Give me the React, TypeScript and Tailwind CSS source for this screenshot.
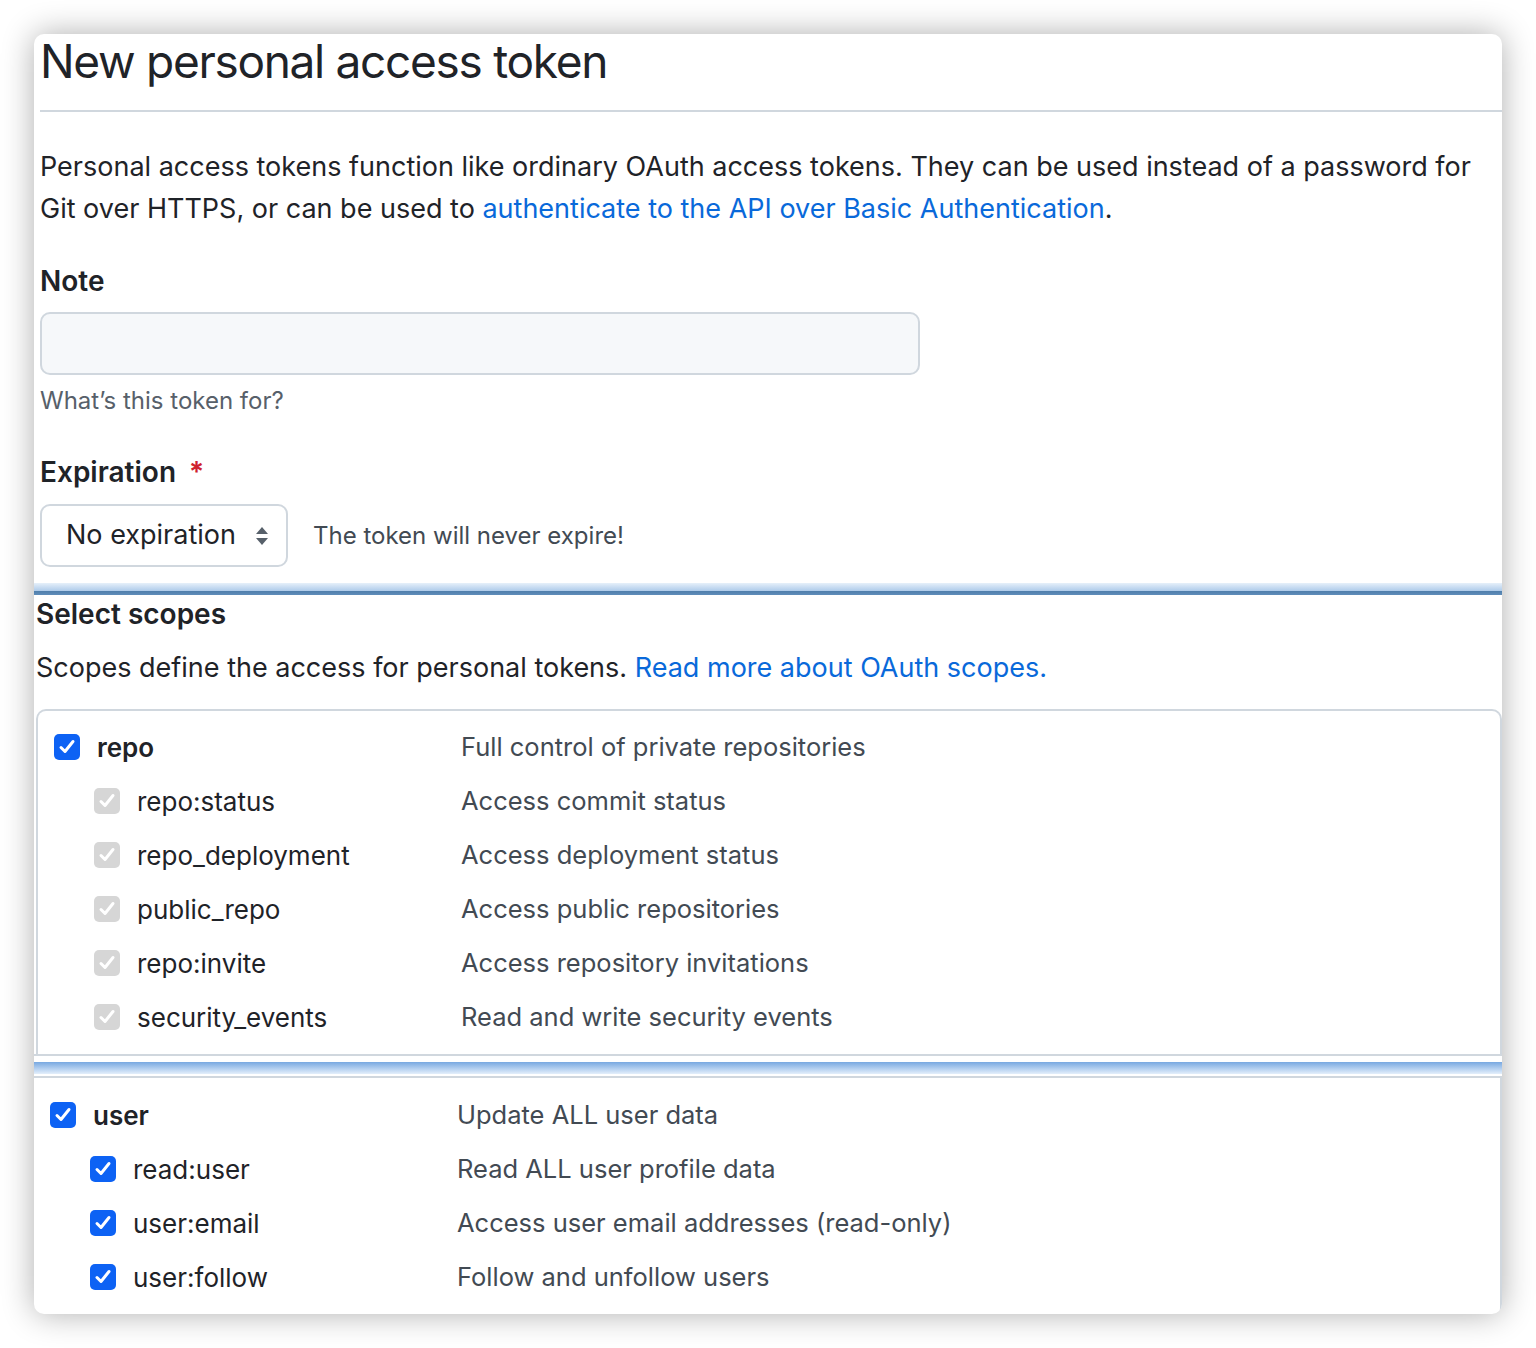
import React from "react";

const font = { fontFamily: "Inter, 'Noto Sans', sans-serif" };

function Check({ variant }: { variant: "blue" | "gray" }) {
  const bg = variant === "blue" ? "bg-[#0d62f4]" : "bg-[#d6d6d6]";
  return (
    <span className={`flex h-[26px] w-[26px] shrink-0 items-center justify-center rounded-[5px] ${bg}`}>
      <svg width="20" height="20" viewBox="0 0 20 20" fill="none">
        <path d="M4 10.5 L8 14.5 L16 4.5" stroke="white" strokeWidth="3" strokeLinecap="round" strokeLinejoin="round" />
      </svg>
    </span>
  );
}

type Row = { name: string; desc: string; sub?: boolean; variant: "blue" | "gray" };

function ScopeRow({ row }: { row: Row }) {
  return (
    <div className="flex h-[54px] items-center">
      <div className="flex w-[407px] items-center">
        <div className={row.sub ? "pl-[40px]" : ""}>
          <Check variant={row.variant} />
        </div>
        <span className={`ml-[17px] text-[26px] text-[#1f2328] ${row.sub ? "" : "font-semibold"}`}>{row.name}</span>
      </div>
      <span className="text-[25.5px] text-[#424a53]">{row.desc}</span>
    </div>
  );
}

const repoRows: Row[] = [
  { name: "repo", desc: "Full control of private repositories", variant: "blue" },
  { name: "repo:status", desc: "Access commit status", sub: true, variant: "gray" },
  { name: "repo_deployment", desc: "Access deployment status", sub: true, variant: "gray" },
  { name: "public_repo", desc: "Access public repositories", sub: true, variant: "gray" },
  { name: "repo:invite", desc: "Access repository invitations", sub: true, variant: "gray" },
  { name: "security_events", desc: "Read and write security events", sub: true, variant: "gray" },
];

const userRows: Row[] = [
  { name: "user", desc: "Update ALL user data", variant: "blue" },
  { name: "read:user", desc: "Read ALL user profile data", sub: true, variant: "blue" },
  { name: "user:email", desc: "Access user email addresses (read-only)", sub: true, variant: "blue" },
  { name: "user:follow", desc: "Follow and unfollow users", sub: true, variant: "blue" },
];

export default function App() {
  return (
    <div className="min-h-[1348px] w-[1536px] bg-white p-[34px]" style={font}>
      <div className="h-[1280px] w-[1468px] overflow-hidden rounded-[10px] bg-white shadow-[0_0_32px_rgba(0,0,0,0.32)]">
        {/* top section */}
        <div className="pl-[6px]">
          <h1 className="border-b-2 border-[#d0d7de] pb-[22px] text-[46px] leading-[54px] font-normal tracking-[-1.3px] text-[#1f2328]">
            New personal access token
          </h1>
          <p className="mt-[34px] pr-[4px] text-[27px] leading-[42px] text-[#1f2328]">
            Personal access tokens function like ordinary OAuth access tokens. They can be used instead of a password for
            Git over HTTPS, or can be used to{" "}
            <span className="text-[#0969da]">authenticate to the API over Basic Authentication</span>.
          </p>
          <div className="mt-[30px] text-[28px] leading-[42px] font-semibold text-[#1f2328]">Note</div>
          <div className="mt-[10px] h-[63px] w-[880px] rounded-[10px] border-2 border-[#d0d7de] bg-[#f6f8fa]" />
          <div className="mt-[9px] text-[24px] leading-[34px] text-[#57606a]">What’s this token for?</div>
          <div className="mt-[33px] flex items-center text-[28px] leading-[42px] font-semibold text-[#1f2328]">
            Expiration <span className="ml-[13px] text-[#cf222e]">*</span>
          </div>
          <div className="mt-[11px] flex items-center">
            <div className="flex h-[63px] w-[248px] items-center justify-between rounded-[10px] border-2 border-[#d0d7de] bg-white pl-[24px] pr-[16px]">
              <span className="text-[27px] text-[#1f2328]">No expiration</span>
              <svg width="16" height="22" viewBox="0 0 16 22">
                <path d="M8 2 L14 9 L2 9 Z" fill="#57606a" />
                <path d="M2 13 L14 13 L8 20 Z" fill="#57606a" />
              </svg>
            </div>
            <span className="ml-[25px] text-[24px] text-[#424a53]">The token will never expire!</span>
          </div>
        </div>

        {/* seam 1 */}
        <div className="mt-[16px] h-[8px] bg-gradient-to-b from-[#e6f0fa] to-[#aecbea]" />
        <div className="h-[4px] bg-gradient-to-b from-[#4f7eab] to-[#5f8dba]" />

        {/* scopes */}
        <div className="pl-[2px]">
          <div className="text-[28px] leading-[38px] font-semibold text-[#1f2328]">Select scopes</div>
          <p className="mt-[14px] text-[27px] leading-[42px] text-[#1f2328]">
            Scopes define the access for personal tokens.{" "}
            <span className="text-[#0969da]">Read more about OAuth scopes.</span>
          </p>
          <div className="mt-[20px] rounded-t-[10px] border-x-2 border-t-2 border-[#d0d7de] pb-[10px] pl-[16px] pt-[9px]">
            {repoRows.map((r) => (
              <ScopeRow key={r.name} row={r} />
            ))}
          </div>
        </div>
        <div className="h-[2px] bg-[#d0d7de]" />
        <div className="h-[6px]" />
        <div className="h-[12px] bg-gradient-to-b from-[#78a8e0] to-[#e4effb]" />
        <div className="h-[2px]" />
        <div className="h-[2px] bg-[#d0d7de]" />
        <div className="h-[240px] rounded-br-[10px] border-r-2 border-[#d0d7de] pl-[16px] pt-[10px]">
          {userRows.map((r) => (
            <ScopeRow key={r.name} row={r} />
          ))}
        </div>
      </div>
    </div>
  );
}
